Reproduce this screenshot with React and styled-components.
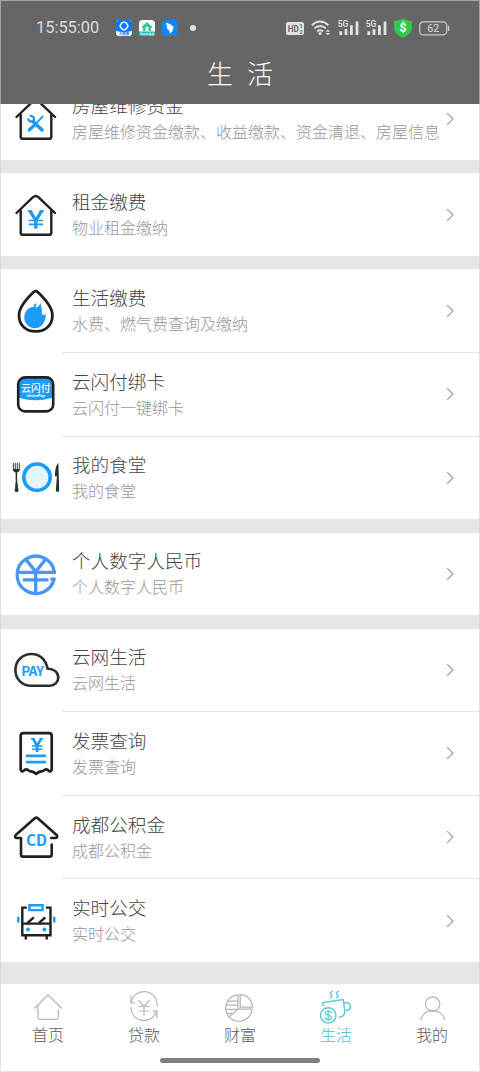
import React from 'react'
import styled, {createGlobalStyle} from 'styled-components';

const BLUE = '#1c9bfb'
const INK = '#202020'

const GlobalStyle = createGlobalStyle`
    * {
        box-sizing: border-box;
    }

    body {
        margin: 0;
        background: #fff;
        font-family: "Noto Sans CJK SC", "Noto Sans", sans-serif;
        font-weight: 300;
    }

    svg {
        display: block;
        flex: none;
    }
`

const Screen = styled.div`
    position: relative;
    display: flex;
    flex-direction: column;
    width: 480px;
    height: 1072px;
    overflow: hidden;
    background: #e6e6e6;

    &::after {
        content: "";
        position: absolute;
        inset: 0;
        border: 1px solid rgba(205, 205, 205, 0.6);
        pointer-events: none;
    }
`

const Header = styled.header`
    flex: none;
    height: 104px;
    background: #666;
    color: #fff;
`

const StatusBar = styled.div`
    display: flex;
    align-items: center;
    height: 56px;
    padding: 0 30px 0 36px;
`

const Clock = styled.span`
    width: 80px;
    font-family: Roboto, sans-serif;
    font-weight: 400;
    font-size: 16.4px;
    line-height: 20px;
    color: #dcdcdc;
`

const AppIcons = styled.div`
    display: flex;
    align-items: center;
    gap: 7px;
`

const Dot = styled.span`
    width: 6px;
    height: 6px;
    margin-left: 5px;
    border-radius: 50%;
    background: #e2e2e2;
`

const SystemIcons = styled.div`
    display: flex;
    align-items: center;
    margin-left: auto;
    gap: 7px;
`

const PageTitle = styled.h1`
    margin: 0;
    font-weight: 300;
    font-size: 26px;
    line-height: 34px;
    word-spacing: 8.5px;
    text-align: center;
`

const List = styled.main`
    flex: 1;
    min-height: 0;
    overflow: hidden;
`

const Groups = styled.div`
    display: flex;
    flex-direction: column;
    gap: 13.4px;
    margin-top: -26.6px;
`

const Group = styled.section`
    background: #fff;
`

const Row = styled.div`
    display: flex;
    align-items: center;
    height: 82.6px;
    padding: 0 26px 0 12px;
`

const Divider = styled.div`
    height: 1px;
    margin-left: 62px;
    background: #e4e4e4;
`

const RowText = styled.div`
    flex: 1;
    min-width: 0;
    margin-left: 12px;
    padding-bottom: 1px;
    white-space: nowrap;
`

const RowTitle = styled.div`
    font-size: 18.6px;
    line-height: 26px;
    color: #444;
`

const RowNote = styled.div`
    font-size: 16px;
    line-height: 26px;
    color: #969696;
`

const TabBar = styled.nav`
    flex: none;
    height: 88.5px;
    background: #fff;
`

const Tabs = styled.div`
    display: flex;
    height: 74px;
`

const Tab = styled.div`
    display: flex;
    flex: 1;
    flex-direction: column;
    align-items: center;
    padding-top: 5.5px;
    font-size: 16px;
    line-height: 18px;
    color: ${props => props.$active ? '#3fbfd3' : '#5c5c5c'};

    svg {
        stroke: ${props => props.$active ? '#5bc7d8' : '#b4b4b4'};
    }
`

const HomeIndicator = styled.div`
    width: 160px;
    height: 5.5px;
    margin: 0 auto;
    border-radius: 3px;
    background: #808080;
`

const SvgText = styled.text`
    font-family: ${props => props.$family || '"Noto Sans CJK SC", sans-serif'};
    font-weight: ${props => props.$weight || 700};
    font-size: ${props => props.$size}px;
    text-anchor: middle;
    stroke: none;
`

const RowIcon = ({children}) => (
    <svg width="48" height="48" viewBox="0 0 48 48" fill="none" strokeLinecap="round" strokeLinejoin="round">
        {children}
    </svg>
)

const House = () => (
    <g stroke={INK} strokeWidth="2.4">
        <path d="M10.5 19v22" stroke="#e4f4ff" strokeWidth="2"/>
        <path d="M4.5 22 21 6.2Q23.7 3.8 26.4 6.2L43 22"/>
        <path d="M8.7 20v21.7q0 2 2 2h26.6q2 0 2-2V20"/>
    </g>
)

const RepairIcon = () => (
    <RowIcon>
        <House/>
        <path d="M20.8 26.4 30 35" stroke={BLUE} strokeWidth="3.6"/>
        <path d="M30.8 21.5 24 28.4" stroke={BLUE} strokeWidth="1.8"/>
        <path d="M23 29.6 17.2 35" stroke={BLUE} strokeWidth="3.2"/>
        <path d="M18.6 20.8c3 .1 3.8 2 3.4 4.6-2 2-4.8 1.6-5.6-1" stroke={BLUE} strokeWidth="2.2"/>
    </RowIcon>
)

const RentIcon = () => (
    <RowIcon>
        <House/>
        <g stroke={BLUE} strokeLinecap="butt">
            <path d="M17.8 19.6 23.8 29.5 29.9 19.6" strokeWidth="3.2" strokeLinejoin="miter"/>
            <path d="M15.7 20.2h4.6M27.4 20.2h4.6M16.7 29.5h14.4M16.7 33.3h14.4" strokeWidth="1.7"/>
            <path d="M23.8 28v9.6" strokeWidth="3.4"/>
        </g>
    </RowIcon>
)

const DropIcon = () => (
    <RowIcon>
        <path d="M21.7 5.1Q23.7 3 25.7 5.1C32 11 40.4 19.5 40.4 28.5 40.4 38.5 33 44.4 23.7 44.4S7 38.5 7 28.5C7 19.5 15.4 11 21.7 5.1Z" stroke={INK} strokeWidth="2.8"/>
        <path d="M29 15.8c-.7 3.6 1.4 4.6.8 8.2-.4 2.1.4 3.4 1.6 4.2 1-.2 1.8-1 2.4-1.8.5 7.7-3.8 14.8-11 14.8-6 0-10.5-4.7-10.5-10.7 0-5.8 4-10.3 9.8-10.7.9 0 1.2.9 2.1.8 2-.5 3.3-2.4 4.8-4.8Z" fill={BLUE}/>
        <path d="M23.7 17.2c-1.2 1.4-1.3 2.8-.4 4.3" stroke={BLUE} strokeWidth="1.6"/>
    </RowIcon>
)

const UnionPayIcon = () => (
    <RowIcon>
        <path d="M7 14q0-6.5 6.5-6.5h20q6.5 0 6.5 6.5v13.7Q23.7 33 7 27.7Z" fill={BLUE}/>
        <rect x="6.2" y="7.4" width="35" height="34" rx="7" stroke={INK} strokeWidth="2.6"/>
        <SvgText x="23.8" y="21.6" $size={9.7} $weight={500} fill="#fff">云闪付</SvgText>
        <SvgText x="23.8" y="27.4" $size={4.2} $family="Roboto, sans-serif" fill="#fff" fontStyle="italic" textLength="18">UnionPay</SvgText>
    </RowIcon>
)

const CanteenIcon = () => (
    <RowIcon>
        <circle cx="25" cy="23.2" r="13.2" fill="#e3f5ff" stroke={BLUE} strokeWidth="3.6"/>
        <g stroke="#26302f" strokeLinecap="butt">
            <path d="M1.4 8.8v7M3.3 8.8v7M5.3 8.8v7M7.3 8.8v7" strokeWidth=".9"/>
            <path d="M.9 15h7Q7.5 18.3 4.4 18.5.9 18.3.9 15Z" fill="#26302f" stroke="none"/>
            <path d="M4.4 17.5v8" strokeWidth="1.5"/>
            <path d="M4.4 24 3 37q1.5 1.7 3.2 0Z" fill="#26302f" strokeWidth=".7"/>
        </g>
        <path d="M46.4 9c-2 1.2-3.5 7-3.5 13.2h2L43.8 37q1.8 1.7 3.4 0Z" fill="#26302f"/>
    </RowIcon>
)

const DigitalYuanIcon = () => (
    <RowIcon>
        <g stroke="#4a95f8" strokeWidth="3.3" strokeLinecap="butt" strokeLinejoin="miter">
            <path d="M42.4 22.6A18.7 18.7 0 1 0 42.2 28.4"/>
            <path d="M5 22.4h38.9M10.9 29.8h25.6M38.4 29.2h5M23.7 21v21"/>
            <path d="M13.2 8.5 23.7 21.8 34.2 8.5"/>
        </g>
    </RowIcon>
)

const CloudPayIcon = () => (
    <RowIcon>
        <path d="M19.3 39.7C9.5 39.7 3.4 32.5 3.4 24 3.4 14.8 10.6 8 19.6 8c8.3 0 14.4 5.6 16 14.7 6.2-.2 10.7 3.7 10.7 8.9 0 4.7-3.8 8.1-8.6 8.1Z" stroke="#2e2e2e" strokeWidth="2.6"/>
        <SvgText x="20.6" y="30.2" $size={13.4} fill={BLUE} textLength="22.8">PAY</SvgText>
    </RowIcon>
)

const InvoiceIcon = () => (
    <RowIcon>
        <path d="M8.7 40V6.8q0-2.7 2.7-2.7H37q2.7 0 2.7 2.7V40q0 2.9-2.6 2.3-2.3-3-4.9-1.2-1.5 1.600-3.100 1.300-2.200.2-4.900 2.500-2.700-2.300-4.900-2.500-1.600.3-3.100-1.300-2.600-1.800-4.900 1.200Q8.700 42.900 8.700 40Z" stroke={INK} strokeWidth="2.7"/>
        <path d="M14.9 26.9h17.9M14.9 33.1h17.9" stroke={BLUE} strokeWidth="2.6"/>
        <g stroke={BLUE} strokeLinecap="butt">
            <path d="m20.900 9.200 4.200 7.800 4.300-7.800" strokeWidth="2.7" strokeLinejoin="miter"/>
            <path d="M19 9.800h3.600M27.700 9.800h3.600M20 17h10.400M20 20.200h10.400" strokeWidth="1.5"/>
            <path d="M25.100 16v7.200" strokeWidth="2.8"/>
        </g>
    </RowIcon>
)

const FundIcon = () => (
    <RowIcon>
        <path d="M39.7 31.6v9.8q0 2.2-2.2 2.2H11.2q-2.2 0-2.2-2.2V25H5q-3-.2-1.3-3L22.8 5.2q1.5-1.2 3 0L44.6 22q1.6 2.8-1.3 3h-4.1" stroke={INK} strokeWidth="2.6"/>
        <SvgText x="24.5" y="33.1" $size={15.4} fill={BLUE} textLength="21">CD</SvgText>
    </RowIcon>
)

const BusIcon = () => (
    <RowIcon>
        <g stroke={INK} strokeWidth="2.4" strokeLinecap="butt" strokeLinejoin="miter">
            <path d="M14.8 10.6H10.3v27.7h28.2V10.6h-4.6M10.3 26.6h28.2M13.8 38.3v4.2M34.7 38.3v4.2"/>
            <path d="m15.5 26 6.3-5.6M27 26l6.3-5.6"/>
        </g>
        <path d="M17.4 8.2h13.2v4.9H17.4Z" stroke={BLUE} strokeWidth="2.4" strokeLinejoin="miter" strokeLinecap="square"/>
        <path d="M5 19.8h2.5v5.8H5ZM41 19.8h2.5v5.8H41Z" fill={BLUE}/>
        <circle cx="16" cy="32.5" r="1.9" fill={BLUE}/>
        <circle cx="32.4" cy="32.5" r="1.9" fill={BLUE}/>
    </RowIcon>
)

const Chevron = () => (
    <svg width="8" height="14" viewBox="0 0 8 14" fill="none" stroke="#999" strokeWidth="1.1">
        <path d="M1.2 1.2 6.9 7 1.2 12.8"/>
    </svg>
)

const TabIcon = ({children}) => (
    <svg width="36" height="36" viewBox="0 0 36 36" fill="none" strokeWidth="1.2">
        {children}
    </svg>
)

const HomeTabIcon = () => (
    <TabIcon>
        <path d="M4.3 19.5 18 5.8l13.8 13.7"/>
        <path d="M8 16.5v12.3q0 1.5 1.5 1.5h17.3q1.5 0 1.5-1.5V20.8"/>
    </TabIcon>
)

const LoanTabIcon = () => (
    <TabIcon>
        <path d="M5.4 13A13 13 0 0 1 31 17.5M30.4 22.5A13 13 0 0 1 5 18"/>
        <path d="M5 6.5V14h4.3M26.8 21.8H31v7.4"/>
        <path d="m12.5 11.3 5.5 6 5.5-6M12.7 17.5h10.6M12.7 22h10.6M18 17.3v9.6"/>
    </TabIcon>
)

const WealthTabIcon = () => (
    <TabIcon>
        <path d="M18.2 5.7A12.8 12.8 0 0 1 30.5 18.2H18.2Z"/>
        <path d="M16 5.9A13.2 13.2 0 1 0 30 20.2H16Z"/>
        <path d="M16 20.2 6.8 28M6 12.2h10M3.8 16.2H16M3.6 20.4H16M4.4 24.3h6.2"/>
    </TabIcon>
)

const LifeTabIcon = () => (
    <TabIcon>
        <path d="M14.800 2.200c-4 1.600-2 2.800-1.200 3.600.8 1 .2 2.400-1.600 3M20.800 2.200c-4 1.600-2 2.800-1.200 3.600.8 1 .2 2.400-1.600 3" strokeWidth="1.400"/>
        <path d="M4.9 17.2v-3.6L25.2 10.5l1.6 11.2q.3 6-6 6.6" strokeWidth="1.4"/>
        <path d="M26 14.2c3.1-1.6 6.2-.2 6.4 3 .2 3-2.4 4.6-5.7 4" strokeWidth="1.4"/>
        <circle cx="10.2" cy="26.4" r="7.7" strokeWidth="1.4"/>
        <path d="M13.2 23.8c-.6-2.2-5.9-2-5.9.3 0 2.8 6.2 1.6 6.2 4.6 0 2.5-6 2.6-6.5 0M10.2 20.8v11.2" strokeWidth="1.2"/>
    </TabIcon>
)

const MineTabIcon = () => (
    <TabIcon>
        <circle cx="18.6" cy="15.1" r="7.2"/>
        <path d="M6.8 31.2a12.1 12.1 0 0 1 23.8 0"/>
    </TabIcon>
)

const SignalIcon = () => (
    <svg width="21" height="16" viewBox="0 0 21 16" fill="#e2e2e2">
        <SvgText x="5" y="7.2" $size={8.6} $family="Roboto, sans-serif" $weight={500}>5G</SvgText>
        <path d="M1.4 11.3h2.8V15H1.4ZM6.6 8.9h2.8V15H6.6ZM12 5.3h2.8V15H12ZM17.6 1.5h2.8V15h-2.8Z"/>
    </svg>
)

const HdIcon = () => (
    <svg width="18" height="13" viewBox="0 0 18 13">
        <rect width="18" height="13" rx="2" fill="#e2e2e2"/>
        <SvgText x="7.2" y="10" $size={9.4} $family="Roboto, sans-serif" fill="#666" textLength="11" lengthAdjust="spacingAndGlyphs">HD</SvgText>
        <SvgText x="15" y="6.2" $size={5.6} $family="Roboto, sans-serif" fill="#666">1</SvgText>
        <SvgText x="15" y="11.6" $size={5.6} $family="Roboto, sans-serif" fill="#666">2</SvgText>
    </svg>
)

const WifiIcon = () => (
    <svg width="20" height="16" viewBox="0 0 20 16" fill="none" stroke="#e2e2e2" strokeWidth="1.9">
        <path d="M.8 5.2q8.3-7.4 16.6 0M3.4 8.4q5.7-5 11.4 0M6.1 11.5q3-2.4 6 0"/>
        <circle cx="9.1" cy="13.6" r="1.5" fill="#e2e2e2" stroke="none"/>
        <path d="M14.7 11.700 16.900 9.400l2.200 2.300ZM14.700 13l2.200 2.300 2.200-2.300Z" fill="#e2e2e2" stroke="none"/>
    </svg>
)

const ShieldIcon = () => (
    <svg width="18" height="20" viewBox="0 0 18 20">
        <path d="M9 .3q4 2.9 8.8 3v7.3c0 4.4-4 7.4-8.8 9.1C4.2 18 .2 15 .2 10.600V3.300Q5 3.200 9 .3Z" fill="#32c850"/>
        <SvgText x="9" y="14" $size={12} $family="Roboto, sans-serif" fill="#fff">$</SvgText>
    </svg>
)

const BatteryIcon = () => (
    <svg width="31" height="15" viewBox="0 0 31 15">
        <rect x=".7" y=".9" width="27" height="13" rx="3.6" fill="none" stroke="#ccc" strokeWidth="1.2"/>
        <path d="M28.9 4.5q1.500.2 1.500 1.500v2.800q0 1.300-1.500 1.500Z" fill="#ccc"/>
        <SvgText x="14.2" y="11.3" $size={10.6} $family="Roboto, sans-serif" $weight={400} fill="#ddd">62</SvgText>
    </svg>
)

const BankAppIcon = () => (
    <svg width="16" height="16" viewBox="0 0 16 16">
        <rect width="16" height="16" rx="3.6" fill="#fff"/>
        <path d="M0 11V3.6Q0 0 3.6 0h8.8Q16 0 16 3.6V11Q8 13 0 11Z" fill="#0878fb"/>
        <path d="m5.8 2.9 2.2-1 2.2 1 1.9 3-1.9 3-2.2 1-2.2-1-1.9-3Z" fill="none" stroke="#fff" strokeWidth="1.4"/>
        <SvgText x="8" y="15.2" $size={3.4} fill="#0878fb">AI成都</SvgText>
    </svg>
)

const HouseAppIcon = () => (
    <svg width="16" height="16" viewBox="0 0 16 16">
        <rect width="16" height="16" rx="3.6" fill="#fff"/>
        <path d="M0 11.5h16v.9q0 3.6-3.6 3.6H3.600Q0 16 0 12.400Z" fill="#16b5b0"/>
        <path d="M2.6 6.900 8 2l5.400 4.900-.8 1H12V11H9.400V8.200a1.400 1.400 0 0 0-2.800 0V11H4V7.900h-.6Z" fill="#3fc596"/>
        <SvgText x="8" y="14.900" $size={2.8} fill="#e6ffff">天府市民云</SvgText>
    </svg>
)

const WingAppIcon = () => (
    <svg width="16" height="16" viewBox="0 0 16 16">
        <rect width="16" height="16" rx="3.6" fill="#0f87fb"/>
        <path d="M4.2 2.6q4.3 1.2 7.5 4.4-.2 2-1.7 3.6l1 .2-3.6 3.2.6-2.300-1-.2.5-1Q4.600 9 4.600 6.900l1 .1Q3.800 5 4.200 2.600Z" fill="#fff"/>
    </svg>
)

const groups = [
    [
        {title: '房屋维修资金', note: '房屋维修资金缴款、收益缴款、资金清退、房屋信息', Icon: RepairIcon},
    ],
    [
        {title: '租金缴费', note: '物业租金缴纳', Icon: RentIcon},
    ],
    [
        {title: '生活缴费', note: '水费、燃气费查询及缴纳', Icon: DropIcon},
        {title: '云闪付绑卡', note: '云闪付一键绑卡', Icon: UnionPayIcon},
        {title: '我的食堂', note: '我的食堂', Icon: CanteenIcon},
    ],
    [
        {title: '个人数字人民币', note: '个人数字人民币', Icon: DigitalYuanIcon},
    ],
    [
        {title: '云网生活', note: '云网生活', Icon: CloudPayIcon},
        {title: '发票查询', note: '发票查询', Icon: InvoiceIcon},
        {title: '成都公积金', note: '成都公积金', Icon: FundIcon},
        {title: '实时公交', note: '实时公交', Icon: BusIcon},
    ],
]

const tabs = [
    {label: '首页', Icon: HomeTabIcon},
    {label: '贷款', Icon: LoanTabIcon},
    {label: '财富', Icon: WealthTabIcon},
    {label: '生活', Icon: LifeTabIcon, active: true},
    {label: '我的', Icon: MineTabIcon},
]

const ServiceRow = ({title, note, Icon}) => (
    <Row>
        <Icon/>
        <RowText>
            <RowTitle>{title}</RowTitle>
            <RowNote>{note}</RowNote>
        </RowText>
        <Chevron/>
    </Row>
)

function App() {
    return (
        <Screen>
            <GlobalStyle/>
            <Header>
                <StatusBar>
                    <Clock>15:55:00</Clock>
                    <AppIcons>
                        <BankAppIcon/>
                        <HouseAppIcon/>
                        <WingAppIcon/>
                        <Dot/>
                    </AppIcons>
                    <SystemIcons>
                        <HdIcon/>
                        <WifiIcon/>
                        <SignalIcon/>
                        <SignalIcon/>
                        <ShieldIcon/>
                        <BatteryIcon/>
                    </SystemIcons>
                </StatusBar>
                <PageTitle>生 活</PageTitle>
            </Header>
            <List>
                <Groups>
                    {groups.map((rows, i) => (
                        <Group key={i}>
                            {rows.map((row, j) => (
                                <React.Fragment key={row.title}>
                                    {j > 0 && <Divider/>}
                                    <ServiceRow {...row}/>
                                </React.Fragment>
                            ))}
                        </Group>
                    ))}
                </Groups>
            </List>
            <TabBar>
                <Tabs>
                    {tabs.map(({label, Icon, active}) => (
                        <Tab key={label} $active={active}>
                            <Icon/>
                            {label}
                        </Tab>
                    ))}
                </Tabs>
                <HomeIndicator/>
            </TabBar>
        </Screen>
    )
}

export default App;
